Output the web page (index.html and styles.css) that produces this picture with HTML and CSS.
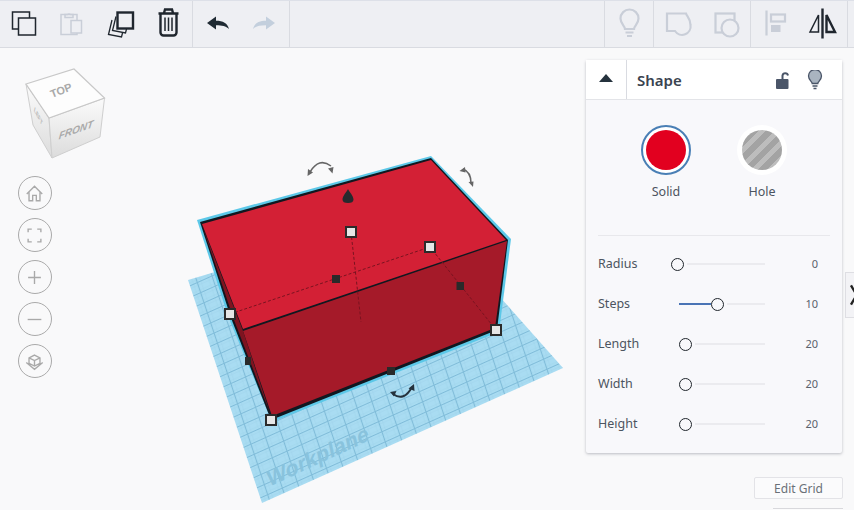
FILE: index.html
```html
<!DOCTYPE html>
<html lang="en">
<head>
<meta charset="utf-8">
<title>Shape editor</title>
<link rel="stylesheet" href="styles.css">
</head>
<body>
<header class="toolbar">
  <div class="group">
    <button class="tool"><svg viewBox="0 0 48 47"><rect class="ink" x="12.5" y="12" width="17" height="17"/><rect class="ink bgfill" x="18.5" y="18" width="17" height="17"/></svg></button>
    <button class="tool"><svg viewBox="0 0 48 47"><rect class="off" x="13" y="14.5" width="16" height="20"/><path class="off" d="M17 14.500h2.500a2.500 2.500 0 0 1 3 0h2.500v3h-8z"/><rect class="off bgfill" x="23" y="20.500" width="10.500" height="12.500"/></svg></button>
    <button class="tool"><svg viewBox="0 0 48 47"><path class="ink thin" d="M16 20l-3.500 14.500 13 2.500 1-4"/><path class="ink thin" d="M20 16.500l-3.500 14 13 2.500 1-4"/><rect class="ink bgfill heavy" x="21.500" y="12.500" width="15.500" height="16"/></svg></button>
    <button class="tool"><svg viewBox="0 0 48 47"><path class="ink heavy" d="M14.500 13.500h20M20 13l1-3.500h7l1 3.500M16.500 14v18.500a3 3 0 0 0 3 3h10a3 3 0 0 0 3-3V14"/><path class="ink" d="M21 17.500v13.500M24.500 17.500v13.500M28 17.500v13.500"/></svg></button>
  </div>
  <div class="group">
    <button class="tool"><svg viewBox="0 0 48 47"><path class="solid" d="M14 23l9-6.500v4.200c7 0 11.500 2.300 13 8.300-3-3-7-3.800-13-3.800v4.300z"/></svg></button>
    <button class="tool"><svg viewBox="0 0 48 47"><path class="solid pale" d="M34 23l-9-6.500v4.200c-7 0-11.500 2.300-13 8.300 3-3 7-3.800 13-3.800v4.300z"/></svg></button>
  </div>
  <div class="group end">
    <button class="tool"><svg viewBox="0 0 48 47"><path class="off wide" d="M20 29c0-3-4.500-5-4.500-10.500a9 9 0 0 1 18 0c0 5.500-4.500 7.500-4.500 10.500z"/><path class="off wide" d="M20.500 32.500h8M22 36h5"/></svg></button>
  </div>
  <div class="group">
    <button class="tool"><svg viewBox="0 0 48 47"><path class="off wide" d="M13 13.500H32c.5 2.500 4.500 5 4.500 11.500a8.500 8.500 0 0 1-15.500 6H13z"/></svg></button>
    <button class="tool"><svg viewBox="0 0 48 47"><rect class="off wide" x="13.500" y="13.500" width="19" height="19"/><circle class="off wide bgfill" cx="28" cy="28" r="8.500"/></svg></button>
  </div>
  <div class="group">
    <button class="tool"><svg viewBox="0 0 48 47"><path class="off wide" d="M15.500 10.500v25"/><rect class="off wide" x="20" y="14.500" width="14" height="7"/><rect class="offfill" x="20" y="25" width="9.500" height="7"/></svg></button>
    <button class="tool"><svg viewBox="0 0 48 47"><path class="ink heavy" d="M23.500 8.500v30"/><path class="ink" d="M19.500 15v17h-8.500z"/><path class="ink heavy" d="M27.500 15v17h8.500z"/></svg></button>
  </div>
</header>

<main class="stage">
  <svg class="scene" viewBox="0 48 854 462">
    <defs>
      <pattern id="cells" patternUnits="userSpaceOnUse" width="1" height="1" patternTransform="matrix(14.7 -6.6 -3.35 -10.1 262 503)">
        <rect width="1" height="1" fill="#a9dcf2"/>
        <path d="M0 .25H1M0 .75H1M.25 0V1M.75 0V1" stroke="#9dd2ea" stroke-width=".03" fill="none"/>
        <path d="M0 .5H1M.5 0V1" stroke="#80bcd9" stroke-width=".07" fill="none"/>
      </pattern>
      <linearGradient id="cubeside" x1="0" y1="0" x2="0" y2="1">
        <stop offset="0" stop-color="#fbfbfb"/><stop offset="1" stop-color="#dcdcdc"/>
      </linearGradient>
    </defs>

    <polygon points="188,280 262,503 563,368 423,210" fill="url(#cells)"/>
    <text class="plane-label" transform="matrix(.9 -.42 .2 .98 269 487)">Workplane</text>

    <polygon points="197,220 431,156 511,239 499,332 272,422 228,316" fill="#5cc8e8"/>
    <polygon points="200,222 431,158 508,240 497,330 271,420 231,318" fill="#101820"/>
    <polygon points="202,224 431,160 506,240 243,329" fill="#d32035"/>
    <polygon points="243,331 507,241 495,328 272,416" fill="#a51a29"/>
    <polygon points="203,228 243,331 270,413 234,320" fill="#7e1420"/>
    <path class="dash" d="M230 314L430 247L496 330M351 232L361 322"/>

    <path class="rot" d="M310 172q9-15 21-6"/><path class="head" d="M307.500 176l.5-7 5 3.500zM333.500 167l-1 6.500-4.500-5z"/>
    <path class="rot" d="M463 169q8 3 8 14"/><path class="head" d="M459.500 171l5.500-4 .5 5.500zM473 187l-4.500-5 5-.5z"/>
    <path class="rot dark" d="M393 394q11 8 19-7"/><path class="head dark" d="M390 392l6.500-1-2.500 5.500zM414 384l.5 7-6-2.500z"/>

    <path class="cone" d="M348 189c1.500 3 5.500 7 5.500 10.500 0 2.500-2 3.500-5.500 3.500s-5.500-1-5.500-3.500c0-3.500 4-7.500 5.500-10.500z"/>
    <rect class="dot" x="332" y="275" width="8" height="8"/>
    <rect class="dot" x="456.500" y="282" width="7.500" height="8"/>
    <rect class="dot" x="387" y="367" width="8" height="8"/>
    <rect class="dot" x="245" y="357" width="6" height="8"/>
    <rect class="grip" x="346" y="227" width="10" height="10"/>
    <rect class="grip" x="425" y="242" width="10" height="10"/>
    <rect class="grip" x="225" y="309" width="10" height="10"/>
    <rect class="grip" x="491" y="325" width="10" height="10"/>
    <rect class="grip" x="266" y="415" width="10" height="10"/>
  </svg>

  <svg class="cube" viewBox="20 64 90 100">
    <polygon points="52,158 33,125 26,84 49,118" fill="url(#cubeside)" stroke="#cfcfcf"/>
    <polygon points="52,158 49,118 104.500,98 100,137" fill="url(#cubeside)" stroke="#cfcfcf"/>
    <polygon points="26,84 74,69 104.500,98 49,118" fill="#fdfdfd" stroke="#c8c8c8" stroke-width="1.200"/>
    <text class="cube-label" transform="matrix(.93 -.36 .35 .93 52 98)">TOP</text>
    <text class="cube-label front" transform="matrix(.95 -.34 -.12 1 58.500 139.500)">FRONT</text>
    <text class="cube-side" transform="matrix(.45 .85 -.1 1 34 111)">LEFT</text>
  </svg>

  <nav class="view-tools">
    <button class="round"><svg viewBox="0 0 34 34"><path class="view" d="M8.500 17.500L17 9l8.500 8.500M11 15.500V25h4v-6h4v6h4v-9.500"/></svg></button>
    <button class="round"><svg viewBox="0 0 34 34"><path class="view" d="M10 13.500V10h4M20 10h4v3.500M24 20.500V24h-4M14 24h-4v-3.500"/></svg></button>
    <button class="round"><svg viewBox="0 0 34 34"><path class="view" d="M17 10v14M10 17h14"/></svg></button>
    <button class="round"><svg viewBox="0 0 34 34"><path class="view" d="M9.500 17h15"/></svg></button>
    <button class="round"><svg viewBox="0 0 34 34"><path class="view" d="M17 10l6 3v6l-6 3-6-3v-6zM11 13l6 3 6-3M17 16v6M8 18l9 7.500 9-7.500"/></svg></button>
  </nav>

  <aside class="panel">
    <div class="panel-head">
      <div class="collapse"><span class="caret"></span></div>
      <div class="panel-title">
        <h2>Shape</h2>
        <svg class="head-icon" viewBox="0 0 16 20"><path class="lock" d="M8.500 9.500V5.500a2.800 2.800 0 0 1 5.500 0"/><rect x="2" y="9" width="12.500" height="10" rx="1" fill="#4a5568"/></svg>
        <svg class="head-icon" viewBox="0 0 16 20"><path d="M5.200 13.500c0-2-3.700-3.500-3.700-7.500a6.500 6.500 0 0 1 13 0c0 4-3.700 5.500-3.700 7.500z" fill="#a9b4c0" stroke="#4a5568" stroke-width="1.300"/><path d="M5.500 16h5M6.500 18.500h3" stroke="#4a5568" stroke-width="1.400" fill="none"/></svg>
      </div>
    </div>

    <div class="kinds">
      <div class="kind">
        <span class="swatch selected"><span class="solid-dot"></span></span>
        <span class="kind-name">Solid</span>
      </div>
      <div class="kind">
        <span class="swatch"><span class="hole-dot"></span></span>
        <span class="kind-name">Hole</span>
      </div>
    </div>

    <div class="props">
      <div class="prop">
        <span class="prop-name">Radius</span>
        <div class="slider"><span class="knob"></span><span class="track"></span></div>
        <span class="prop-value">0</span>
      </div>
      <div class="prop">
        <span class="prop-name">Steps</span>
        <div class="slider"><span class="fill" style="width:32px"></span><span class="knob"></span><span class="track"></span></div>
        <span class="prop-value">10</span>
      </div>
      <div class="prop">
        <span class="prop-name">Length</span>
        <div class="slider"><span class="fill" style="width:0"></span><span class="knob"></span><span class="track"></span></div>
        <span class="prop-value">20</span>
      </div>
      <div class="prop">
        <span class="prop-name">Width</span>
        <div class="slider"><span class="fill" style="width:0"></span><span class="knob"></span><span class="track"></span></div>
        <span class="prop-value">20</span>
      </div>
      <div class="prop">
        <span class="prop-name">Height</span>
        <div class="slider"><span class="fill" style="width:0"></span><span class="knob"></span><span class="track"></span></div>
        <span class="prop-value">20</span>
      </div>
    </div>
  </aside>

  <div class="side-tab"><svg viewBox="0 0 9 46"><path d="M5 13l6 10-6 10" fill="none" stroke="#222" stroke-width="2.500"/></svg></div>
  <button class="edit-grid">Edit Grid</button>
  <div class="next-button"></div>
</main>
</body>
</html>
```
FILE: styles.css
```css
* { box-sizing: border-box; }

html, body {
  margin: 0;
  height: 510px;
  overflow: hidden;
}

body {
  display: flex;
  flex-direction: column;
  width: 854px;
  background: #f9f9fa;
  font-family: "Noto Sans", "Open Sans", sans-serif;
  color: #4a5260;
}

button {
  font: inherit;
  padding: 0;
  border: 0;
  background: none;
}

/* toolbar */
.toolbar {
  display: flex;
  flex: none;
  height: 48px;
  background: #eeeff3;
  border-top: 1px solid #dde0e8;
  border-bottom: 1px solid #d9dbe1;
}

.group {
  display: flex;
  border-right: 1px solid #d9dbe1;
}

.group.end {
  margin-left: auto;
  border-left: 1px solid #d9dbe1;
}

.group:last-child { margin-right: 6px; }

.tool {
  width: 48px;
  height: 46px;
  margin-top: -1px;
}

.tool svg {
  display: block;
  width: 48px;
  height: 47px;
}

.ink, .off {
  fill: none;
  stroke-width: 1.500;
}

.ink { stroke: #1f262e; }
.off { stroke: #c9ced8; }
.ink.bgfill, .off.bgfill { fill: #eeeff3; }
.heavy { stroke-width: 2.400; }
.thin { stroke-width: 1.300; }
.wide { stroke-width: 2.200; }
.solid { fill: #1f2a33; }
.solid.pale { fill: #c3cfdd; }
.offfill { fill: #c9ced8; }

/* scene */
.stage {
  position: relative;
  flex: 1;
}

.scene {
  position: absolute;
  inset: 0;
  width: 854px;
  height: 462px;
}

.plane-label {
  font: 700 22px "Liberation Sans", sans-serif;
  fill: #89c3dd;
}

.dash {
  fill: none;
  stroke: #7a1320;
  stroke-width: 1;
  stroke-dasharray: 3 2;
}

.rot {
  fill: none;
  stroke: #666;
  stroke-width: 1.500;
}

.head { fill: #666; }
.rot.dark { stroke: #25323d; stroke-width: 2; }
.head.dark { fill: #25323d; }
.cone { fill: #262a2e; }
.dot { fill: #2a2a2a; }

.grip {
  fill: #e6e6e6;
  stroke: #2b2b2b;
  stroke-width: 2;
}

.cube {
  position: absolute;
  left: 20px;
  top: 16px;
  width: 90px;
  height: 100px;
}

.cube-label {
  font: 700 11px "Liberation Sans", sans-serif;
  fill: #a9a9a9;
}

.cube-label.front {
  font-size: 10.500px;
  font-style: italic;
}

.cube-side {
  font: italic 700 7px "Liberation Sans", sans-serif;
  fill: #b5b5b5;
}

.view-tools {
  position: absolute;
  left: 18px;
  top: 128px;
  display: flex;
  flex-direction: column;
  gap: 8px;
}

.round {
  display: block;
  width: 34px;
  height: 34px;
  border: 1.500px solid #aaa;
  border-radius: 50%;
}

.round svg {
  display: block;
  width: 31px;
  height: 31px;
}

.view {
  fill: none;
  stroke: #a9a9a9;
  stroke-width: 1.500;
}

/* inspector */
.panel {
  position: absolute;
  left: 586px;
  top: 12px;
  width: 256px;
  height: 393px;
  display: flex;
  flex-direction: column;
  background: #f8f8fb;
  border-radius: 2px;
  box-shadow: 0 1px 3px rgba(70, 75, 90, .35);
}

.panel-head {
  display: flex;
  flex: none;
  height: 40px;
  background: #fff;
  border-bottom: 1px solid #e3e4e8;
}

.collapse {
  display: flex;
  align-items: center;
  justify-content: center;
  width: 41px;
  border-right: 1px solid #d9dbe1;
  padding-bottom: 3px;
}

.caret {
  border-left: 7.500px solid transparent;
  border-right: 7.500px solid transparent;
  border-bottom: 8px solid #25323d;
}

.panel-title {
  display: flex;
  flex: 1;
  align-items: center;
  gap: 17px;
  padding: 0 19px 0 10px;
}

.panel-title h2 {
  flex: 1;
  margin: 0;
  font-size: 15px;
  font-weight: 600;
  color: #3a4350;
}

.head-icon {
  display: block;
  width: 16px;
  height: 20px;
}

.lock {
  fill: none;
  stroke: #4a5568;
  stroke-width: 2;
}

.kinds {
  display: flex;
  justify-content: center;
  flex: none;
  height: 136px;
  padding-top: 25px;
  margin: 0 12px;
  border-bottom: 1px solid #e8e8ec;
}

.kind {
  display: flex;
  flex-direction: column;
  align-items: center;
  width: 96px;
  gap: 9px;
}

.swatch {
  display: flex;
  align-items: center;
  justify-content: center;
  width: 50px;
  height: 50px;
  border-radius: 50%;
  background: #fff;
}

.swatch.selected {
  border: 2px solid #4a7fb5;
}

.solid-dot, .hole-dot {
  display: block;
  width: 40px;
  height: 40px;
  border-radius: 50%;
}

.solid-dot { background: #e2001f; }

.hole-dot {
  background: repeating-linear-gradient(-45deg, #a3a3a3 0 6px, #bdbdbd 6px 11px);
}

.kind-name {
  font-size: 12.500px;
  line-height: 16px;
  color: #4c5460;
}

.props {
  display: flex;
  flex-direction: column;
  padding: 7px 0 0 12px;
}

.prop {
  display: flex;
  align-items: center;
  height: 40px;
}

.prop-name {
  width: 73px;
  font-size: 12.500px;
  color: #4c5460;
}

.slider {
  display: flex;
  align-items: center;
  width: 94px;
  padding-top: 2px;
}

.fill {
  height: 2px;
  margin-left: 8px;
  background: #4a74b5;
}

.knob {
  flex: none;
  width: 13px;
  height: 13px;
  border: 1.500px solid #20262c;
  border-radius: 50%;
  background: #f8f8fb;
}

.track {
  flex: 1;
  height: 2px;
  margin-left: 3px;
  background: #ebebef;
}

.prop-value {
  width: 53px;
  font-size: 11px;
  text-align: right;
  color: #5a616c;
}

/* lower right */
.side-tab {
  position: absolute;
  left: 845px;
  top: 224px;
  width: 9px;
  height: 46px;
  background: #f3f3f6;
  border: 1px solid #dedee3;
  border-right: 0;
  overflow: hidden;
}

.side-tab svg {
  display: block;
  width: 9px;
  height: 44px;
}

.edit-grid {
  position: absolute;
  left: 754px;
  top: 429px;
  width: 89px;
  height: 22px;
  background: #fbfbfc;
  border: 1px solid #e3e3e7;
  border-radius: 2px;
  font-size: 12px;
  color: #6a7078;
}

.next-button {
  position: absolute;
  left: 773px;
  top: 460px;
  width: 70px;
  height: 10px;
  border-top: 1px solid #d8d8dc;
  background: #fbfbfc;
}
```
